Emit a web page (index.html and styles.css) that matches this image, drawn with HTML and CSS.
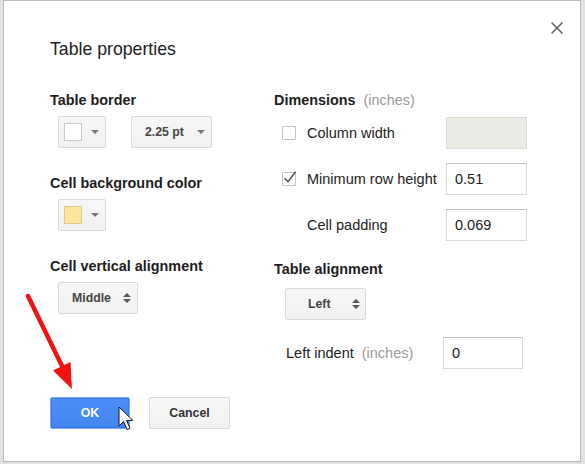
FILE: index.html
```html
<!DOCTYPE html>
<html>
<head>
<meta charset="utf-8">
<link rel="stylesheet" href="styles.css">
</head>
<body>
<div class="dialog">
  <div class="header">
    <h1 class="title">Table properties</h1>
    <button class="close" aria-label="Close">
      <svg width="12" height="12" viewBox="0 0 12 12"><path d="M0.5 0.5L11.5 11.5M11.5 0.5L0.5 11.5" stroke="#5f5f5f" stroke-width="1.5" fill="none"/></svg>
    </button>
  </div>
  <div class="cols">
    <div class="col-left">
      <div class="section">
        <h2 class="heading">Table border</h2>
        <div class="controls">
          <div class="btn color-btn"><span class="swatch"></span><span class="tri-down"></span></div>
          <div class="btn pt-btn"><span>2.25 pt</span><span class="tri-down pt-arrow"></span></div>
        </div>
      </div>
      <div class="section">
        <h2 class="heading">Cell background color</h2>
        <div class="controls">
          <div class="btn color-btn"><span class="swatch swatch-yellow"></span><span class="tri-down"></span></div>
        </div>
      </div>
      <div class="section">
        <h2 class="heading">Cell vertical alignment</h2>
        <div class="controls">
          <div class="btn spin-btn middle"><span>Middle</span><span class="spin"><span class="tri-up"></span><span class="tri-dn"></span></span></div>
        </div>
      </div>
    </div>
    <div class="col-right">
      <h2 class="heading">Dimensions <span class="unit">(inches)</span></h2>
      <div class="dims">
        <div class="row">
          <span class="check"></span>
          <span class="row-label">Column width</span>
          <span class="input disabled"></span>
        </div>
        <div class="row">
          <span class="check checked"><svg class="tick" width="16" height="16" viewBox="0 0 16 16"><path d="M2.5 8.2L6 11.6L13.6 1.8" stroke="#4a4a4a" stroke-width="1.4" fill="none"/></svg></span>
          <span class="row-label">Minimum row height</span>
          <span class="input">0.51</span>
        </div>
        <div class="row">
          <span class="check-space"></span>
          <span class="row-label">Cell padding</span>
          <span class="input">0.069</span>
        </div>
      </div>
      <h2 class="heading align-heading">Table alignment</h2>
      <div class="align-ctl">
        <div class="btn spin-btn left-sel"><span>Left</span><span class="spin"><span class="tri-up"></span><span class="tri-dn"></span></span></div>
      </div>
      <div class="row indent-row">
        <span class="indent-label">Left indent <span class="unit">(inches)</span></span>
        <span class="input indent-input">0</span>
      </div>
    </div>
  </div>
  <div class="actions">
    <button class="btn action ok">OK</button>
    <button class="btn action cancel">Cancel</button>
  </div>
</div>
<svg class="red-arrow" width="100" height="120" viewBox="0 0 100 120">
  <path d="M28 16L62 86" stroke="#f11313" stroke-width="4.5" stroke-linecap="round" fill="none"/>
  <path d="M72 109L53 90.5L70.5 82Z" fill="#f11313"/>
</svg>
<svg class="cursor" width="17" height="25" viewBox="0 0 17 25">
  <path d="M1 1L1 20L5.6 15.6L9 23.5L12 22.2L8.6 14.4L14.8 14.4Z" fill="#fff" stroke="#111" stroke-width="1" stroke-linejoin="round"/>
</svg>
</body>
</html>
```
FILE: styles.css
```css
* { box-sizing: border-box; }
html, body { margin: 0; padding: 0; }
body {
  position: relative;
  width: 585px;
  height: 464px;
  overflow: hidden;
  background: #e2e2e0;
  font-family: "Liberation Sans", Arial, sans-serif;
  color: #222;
}
.dialog {
  position: relative;
  margin-left: 3px;
  width: 578px;
  height: 462px;
  background: #fff;
  border: 1px solid #b9b9b9;
  padding: 20px 17px 0 46px;
}
.header {
  display: flex;
  justify-content: space-between;
  align-items: flex-start;
}
.title {
  margin: 17px 0 0;
  font-size: 17.7px;
  line-height: 22px;
  font-weight: normal;
  color: #222;
}
.close {
  width: 12px;
  height: 12px;
  padding: 0;
  margin-top: 1px;
  border: 0;
  background: none;
  display: block;
}
.close svg { display: block; }
.cols {
  display: flex;
  margin-top: 32px;
}
.col-left { width: 224px; }
.col-right { flex: 1; }
.heading {
  margin: 0;
  font-size: 14.4px;
  line-height: 17px;
  font-weight: bold;
  color: #1d1d1d;
}
.unit {
  font-weight: normal;
  color: #9a9a9a;
  margin-left: 4px;
}
.section { margin-bottom: 27px; }
.section .heading { margin-bottom: 7px; }
.controls {
  display: flex;
  gap: 25px;
  padding-left: 8px;
}
.btn {
  height: 32px;
  border: 1px solid #dadada;
  border-radius: 2px;
  background: linear-gradient(#f7f7f7, #f1f1f1);
  display: inline-flex;
  align-items: center;
  font-family: "Liberation Sans", Arial, sans-serif;
  font-weight: bold;
  font-size: 12.3px;
  color: #444;
}
.color-btn { width: 48px; padding-left: 5px; }
.swatch {
  width: 18px;
  height: 18px;
  background: #fff;
  border: 1px solid #c8c8c8;
}
.swatch-yellow {
  background: #fee59c;
  border-color: #dcc88f;
}
.tri-down {
  width: 0;
  height: 0;
  margin-left: 9px;
  border-left: 4px solid transparent;
  border-right: 4px solid transparent;
  border-top: 4px solid #767676;
}
.pt-btn { width: 81px; padding-left: 13px; }
.pt-arrow { margin-left: 13px; }
.spin {
  display: flex;
  flex-direction: column;
  gap: 2px;
}
.tri-up, .tri-dn {
  width: 0;
  height: 0;
  border-left: 4px solid transparent;
  border-right: 4px solid transparent;
}
.tri-up { border-bottom: 4.5px solid #555; }
.tri-dn { border-top: 4.5px solid #555; }
.middle { width: 80px; padding-left: 13px; }
.middle .spin { margin-left: 12px; }
.dims {
  padding-left: 8px;
  margin-top: 8px;
  display: flex;
  flex-direction: column;
  gap: 14px;
}
.row {
  display: flex;
  align-items: center;
  height: 32px;
  font-size: 14.5px;
  line-height: 17px;
}
.check {
  position: relative;
  width: 14px;
  height: 14px;
  border: 1px solid #c4c4c4;
  border-radius: 1px;
  background: #fff;
  margin-right: 11px;
}
.tick {
  position: absolute;
  left: -1px;
  top: -3px;
  overflow: visible;
}
.check-space { width: 25px; }
.row-label { width: 139px; color: #222; }
.input {
  width: 81px;
  height: 32px;
  border: 1px solid #d9d9d9;
  border-top-color: #c2c2c2;
  padding-left: 8px;
  display: flex;
  align-items: center;
  font-size: 14.5px;
  color: #222;
  background: #fff;
}
.input.disabled {
  background: #ececE6;
  border-color: #dcdcd6;
}
.align-heading { margin-top: 20px; }
.align-ctl {
  margin-top: 10px;
  padding-left: 11px;
}
.left-sel { width: 81px; padding-left: 22px; }
.left-sel .spin { margin-left: 21px; }
.indent-row {
  margin-top: 17px;
  padding-left: 12px;
}
.indent-label { width: 157px; }
.indent-input { width: 80px; }
.actions {
  display: flex;
  gap: 19px;
  margin-top: 28px;
}
.action {
  justify-content: center;
  padding: 0;
  cursor: default;
}
.ok {
  width: 80px;
  background: linear-gradient(#4d8ff8, #4285f2);
  border: 1px solid #7aa9f7;
  color: #fff;
  box-shadow: inset 0 0 0 1px #3b7ae8;
}
.cancel {
  width: 81px;
  color: #333;
}
.red-arrow {
  position: absolute;
  left: 0;
  top: 280px;
}
.cursor {
  position: absolute;
  left: 118px;
  top: 406px;
}
```
